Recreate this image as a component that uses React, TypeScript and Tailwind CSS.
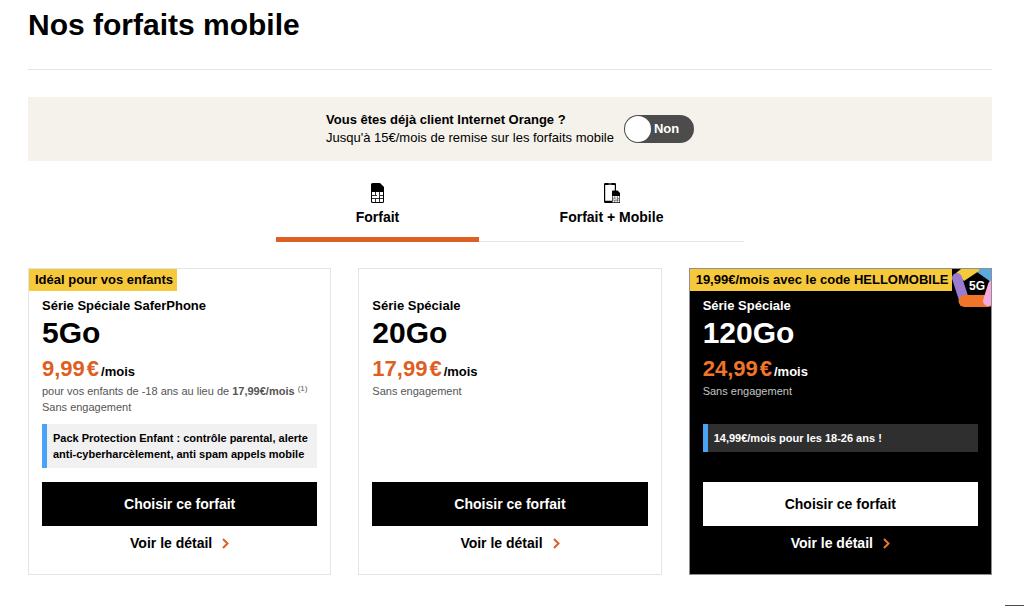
import { useState } from 'react'
import type { ReactNode } from 'react'
import clsx from 'clsx'

type Plan = {
  id: string
  badge?: string
  name: string
  data: string
  price: string
  notes: ReactNode[]
  promo?: string
  dark?: boolean
  is5G?: boolean
}

const plans: Plan[] = [
  {
    id: 'saferphone',
    badge: 'Idéal pour vos enfants',
    name: 'Série Spéciale SaferPhone',
    data: '5Go',
    price: '9,99',
    notes: [
      <>
        pour vos enfants de -18 ans au lieu de <b>17,99€/mois</b>{' '}
        <sup className="text-[8px]">(1)</sup>
      </>,
      'Sans engagement',
    ],
    promo: 'Pack Protection Enfant : contrôle parental, alerte anti-cyberharcèlement, anti spam appels mobile',
  },
  {
    id: 'serie-20',
    name: 'Série Spéciale',
    data: '20Go',
    price: '17,99',
    notes: ['Sans engagement'],
  },
  {
    id: 'serie-120',
    badge: '19,99€/mois avec le code HELLOMOBILE',
    name: 'Série Spéciale',
    data: '120Go',
    price: '24,99',
    notes: ['Sans engagement'],
    promo: '14,99€/mois pour les 18-26 ans !',
    dark: true,
    is5G: true,
  },
]

const tabs = [
  { id: 'forfait', label: 'Forfait', icon: SimIcon },
  { id: 'mobile', label: 'Forfait + Mobile', icon: PhoneSimIcon },
]

export default function App() {
  const [isClient, setIsClient] = useState(false)
  const [tab, setTab] = useState('forfait')

  return (
    <div className="bg-white pl-7 pr-8 pb-7 font-['Liberation_Sans',Arial,sans-serif] text-black">
      <h1 className="border-b border-[#e4e4e4] pt-[5px] pb-6 text-[30px] leading-10 font-bold">
        Nos forfaits mobile
      </h1>

      {/* Internet customer switch */}
      <div className="mt-[27px] flex items-center justify-center gap-2.5 bg-[#f5f2eb] px-4 py-3.5">
        <label htmlFor="client" className="text-[13px] leading-[18px]">
          <span className="block font-bold">Vous êtes déjà client Internet Orange ?</span>
          Jusqu'à 15€/mois de remise sur les forfaits mobile
        </label>
        <span className="relative flex h-7 w-[70px] shrink-0">
          <input
            id="client"
            type="checkbox"
            role="switch"
            checked={isClient}
            onChange={(e) => setIsClient(e.target.checked)}
            className="peer h-full w-full cursor-pointer appearance-none rounded-full bg-[#4c4c4c] checked:bg-[#de5f24]"
          />
          <span className="pointer-events-none absolute inset-y-px left-px w-[26px] rounded-full bg-white peer-checked:right-px peer-checked:left-auto" />
          <span className="pointer-events-none absolute inset-y-0 left-[30px] text-[13px] leading-7 font-bold text-white peer-checked:left-3">
            {isClient ? 'Oui' : 'Non'}
          </span>
        </span>
      </div>

      {/* Tabs */}
      <div role="tablist" className="mx-auto mt-5 flex w-full max-w-[468px] border-b border-[#e4e4e4]">
        {tabs.map(({ id, label, icon: Icon }) => (
          <button
            key={id}
            type="button"
            role="tab"
            aria-selected={tab === id}
            onClick={() => setTab(id)}
            className={clsx(
              '-mb-px flex cursor-pointer flex-col items-center border-b-5 pt-0.5 pb-2.5 text-sm leading-5 font-bold',
              id === 'forfait' ? 'w-[203px]' : 'flex-1',
              tab === id ? 'border-[#de5f24]' : 'border-transparent',
            )}
          >
            <Icon />
            <span className="mt-1">{label}</span>
          </button>
        ))}
      </div>

      <div className="mt-[26px] grid grid-cols-3 gap-[27px]">
        {plans.map((plan) => (
          <PlanCard key={plan.id} plan={plan} />
        ))}
      </div>

      {/* Top edge of the floating help tab */}
      <div className="fixed right-0 bottom-0 h-px w-[19px] bg-[#4c4c4c]" />
    </div>
  )
}

function PlanCard({ plan }: { plan: Plan }) {
  return (
    <article
      className={clsx(
        'relative flex flex-col border pb-[21px]',
        plan.dark ? 'border-[#8f8f8f] bg-black text-white' : 'border-[#e4e4e4] bg-white',
      )}
    >
      <div className="h-[22px]">
        {plan.badge && (
          <p className="w-fit bg-[#f6c83c] pr-1 pl-1.5 text-[13px] leading-[22px] font-bold whitespace-nowrap text-black">
            {plan.badge}
          </p>
        )}
      </div>
      {plan.is5G && <Badge5G />}

      <div className="flex flex-1 flex-col px-[13px] pt-[5px]">
        <p className="text-[13px] leading-5 font-bold">{plan.name}</p>
        <h2 className="text-[30px] leading-[34px] font-bold">{plan.data}</h2>
        <p className="mt-[7px] text-[22px] leading-[23px] font-bold">
          <span className={plan.dark ? 'text-[#f07529]' : 'text-[#de5f24]'}>
            {plan.price}
            <span className="ml-0.5">€</span>
          </span>
          <span className="ml-0.5 text-[13px]">/mois</span>
        </p>
        <div className={clsx('min-h-[41px] text-[11px] leading-4', plan.dark ? 'text-[#c4c4c4]' : 'text-[#555555]')}>
          {plan.notes.map((note, i) => (
            <p key={i}>{note}</p>
          ))}
        </div>
        <div className="h-[58px]">
          {plan.promo && (
            <p
              className={clsx(
                'border-l-5 border-[#4ba3f7] py-1.5 pr-1 pl-1.5 text-[11px] leading-4 font-bold',
                plan.dark ? 'bg-[#2f2f2f]' : 'bg-[#f1f1f1]',
              )}
            >
              {plan.promo}
            </p>
          )}
        </div>
        <button
          type="button"
          className={clsx(
            'h-11 w-full cursor-pointer text-sm font-bold',
            plan.dark ? 'bg-white text-black' : 'bg-black text-white',
          )}
        >
          Choisir ce forfait
        </button>
        <a href="#" className="mt-[7px] flex items-center justify-center gap-2.5 text-sm leading-5 font-bold">
          Voir le détail
          <svg
            viewBox="0 0 7 11"
            className={clsx('h-[11px] w-[7px]', plan.dark ? 'text-[#f07529]' : 'text-[#de5f24]')}
            fill="none"
            stroke="currentColor"
            strokeWidth="2"
            aria-hidden="true"
          >
            <path d="M1 1l4.5 4.5L1 10" />
          </svg>
        </a>
      </div>
    </article>
  )
}

function SimShape() {
  return (
    <>
      <path d="M1.5 0H9l4 4v14.5a1.5 1.5 0 0 1-1.5 1.5h-10A1.5 1.5 0 0 1 0 18.5v-17A1.5 1.5 0 0 1 1.5 0z" fill="black" />
      <path d="M1 9h11v9.3a.7.7 0 0 1-.7.7H1.7a.7.7 0 0 1-.7-.7z" fill="white" />
      <path
        d="M1 12.5h3.5V9M8.5 9v3.5H12M4.5 15.5V19M8.5 12.5V19M1 15.5h11M4.5 12.5h1.5"
        stroke="black"
        strokeWidth="0.8"
        fill="none"
      />
    </>
  )
}

function SimIcon() {
  return (
    <svg viewBox="0 0 13 20" className="h-5 w-[13px]" aria-hidden="true">
      <SimShape />
    </svg>
  )
}

function PhoneSimIcon() {
  return (
    <svg viewBox="0 0 16 20" className="h-5 w-4" aria-hidden="true">
      <path
        d="M1.2 0h9.6A1.2 1.2 0 0 1 12 1.2V8h-1.2V2H1.2v15.8H8V20H1.2A1.2 1.2 0 0 1 0 18.8V1.2A1.2 1.2 0 0 1 1.2 0z"
        fill="black"
      />
      <path d="M4.5 1h3" stroke="white" strokeWidth="0.6" />
      <g transform="translate(8 7.5) scale(.62)">
        <SimShape />
      </g>
    </svg>
  )
}

function Badge5G() {
  return (
    <svg viewBox="0 0 39 38" className="absolute top-0 right-0 h-[38px] w-[39px]" role="img" aria-label="5G">
      <rect width="39" height="38" fill="black" />
      <path d="M25 0h14v13L25 3z" fill="#5aa9e0" />
      <path d="M4 4L9 0h18v2L12 12z" fill="#f6c83c" />
      <g fill="none" strokeLinecap="round">
        <path d="M5 9L11.5 29" stroke="#9b7bd0" strokeWidth="10" />
        <path d="M12.5 32H36" stroke="#f07529" strokeWidth="12" />
        <path d="M36 32L41 16" stroke="#f4a9e0" strokeWidth="10" />
      </g>
      <text x="25" y="21" textAnchor="middle" fontSize="12" fontWeight="700" fill="white">
        5G
      </text>
    </svg>
  )
}
